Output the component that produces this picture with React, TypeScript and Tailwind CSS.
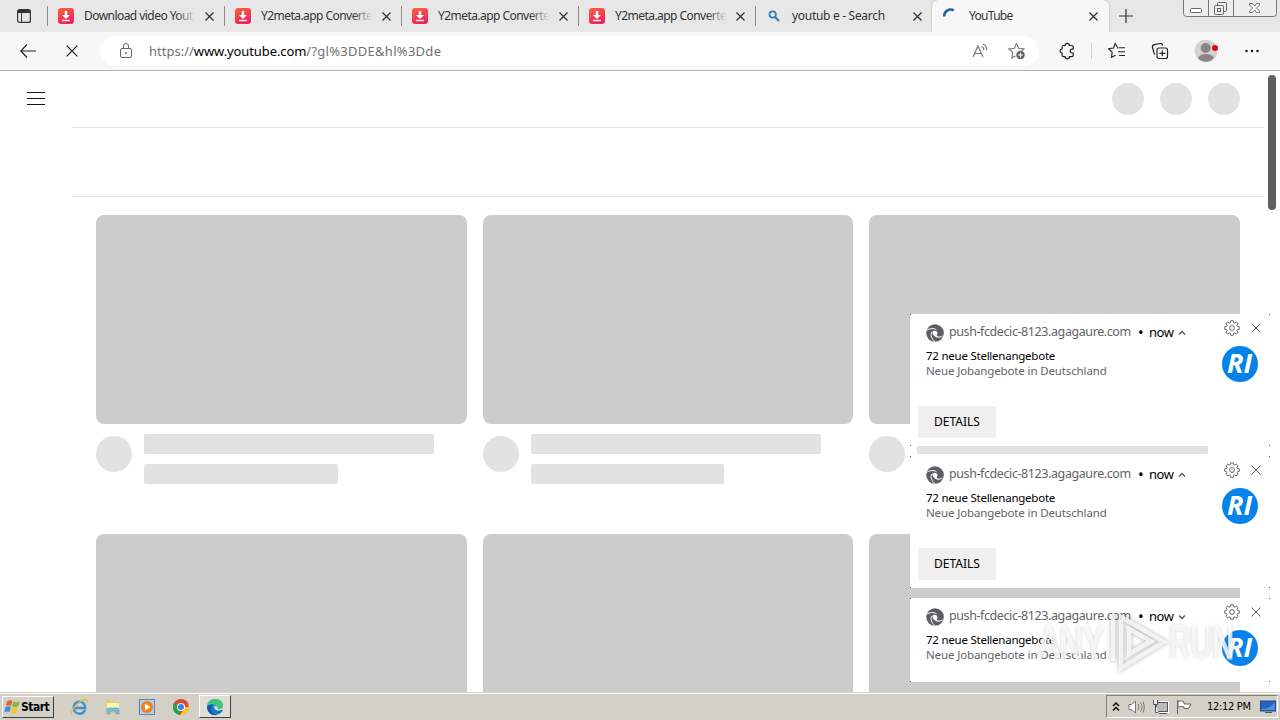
import type { ReactNode } from "react";

const tabs = [
  { icon: "download", title: "Download video Yout" },
  { icon: "download", title: "Y2meta.app Converte" },
  { icon: "download", title: "Y2meta.app Converte" },
  { icon: "download", title: "Y2meta.app Converte" },
  { icon: "search", title: "youtub e - Search" },
];

const notifications = [
  { id: 1, expanded: true },
  { id: 2, expanded: true },
  { id: 3, expanded: false },
];

function Cross({ size = 9, width = 1.4, color = "#333" }: { size?: number; width?: number; color?: string }) {
  return (
    <svg width={size} height={size} viewBox="0 0 10 10" fill="none" stroke={color} strokeWidth={width}>
      <path d="M.5.5l9 9M9.5.5l-9 9" />
    </svg>
  );
}

function DownloadIcon() {
  return (
    <svg width="16" height="16" viewBox="0 0 16 16" className="shrink-0">
      <defs>
        <linearGradient id="dl" x1="0" y1="0" x2="0.4" y2="1">
          <stop offset="0" stopColor="#f8663c" />
          <stop offset="1" stopColor="#f02361" />
        </linearGradient>
      </defs>
      <rect width="16" height="16" rx="3" fill="url(#dl)" />
      <path d="M6.8 3h2.4v4H12L8 11 4 7h2.8z" fill="#fff" />
      <path d="M4 12.5h8" stroke="#fff" strokeWidth="1.4" />
    </svg>
  );
}

function SearchIcon() {
  return (
    <svg width="16" height="16" viewBox="0 0 16 16" fill="none" stroke="#2f7bc8" className="shrink-0">
      <circle cx="6.7" cy="6.5" r="3.2" strokeWidth="1.7" />
      <path d="M9 9l4 4" strokeWidth="2" />
    </svg>
  );
}

function TabStrip() {
  return (
    <div className="flex h-8 bg-[#e7e7e7] text-[#333]">
      <div className="flex w-[47px] shrink-0 items-center pl-[17px]">
        <svg width="14" height="14" viewBox="0 0 14 14" fill="none" stroke="#333">
          <rect x=".6" y=".6" width="12.8" height="12.8" rx="2" strokeWidth="1.2" />
          <path d="M1 2.5h12" strokeWidth="3" />
          <path d="M4.5 3v10" />
        </svg>
      </div>
      {tabs.map((tab, i) => (
        <div key={i} className="flex h-8 w-[177px] shrink-0 items-center">
          <span className="h-5 w-px bg-[#8c8c8c]" />
          <span className="ml-[10px] flex">{tab.icon === "download" ? <DownloadIcon /> : <SearchIcon />}</span>
          <span
            className={`relative ml-[10px] w-[112px] text-[12px] leading-[18px] whitespace-nowrap ${
              tab.icon === "download" ? "tracking-[-0.55px]" : "tracking-[-0.3px]"
            }`}
          >
            {tab.title}
            {tab.icon === "download" && (
              <span className="absolute inset-y-0 right-0 w-5 bg-linear-to-r from-[#e7e7e7]/0 to-[#e7e7e7]" />
            )}
          </span>
          <span className="ml-[9px] flex">
            <Cross />
          </span>
        </div>
      ))}
      <div className="flex h-8 w-[177px] shrink-0 items-center rounded-t-md bg-[#f7f7f7] shadow-[0_0_2px_#999] [clip-path:inset(0_-3px_0_-3px)]">
        <svg width="16" height="16" viewBox="0 0 16 16" fill="none" className="ml-[10px]">
          <path d="M2.2 8.5A6.5 6.5 0 0 1 11.8 2.4" stroke="#1b62ae" strokeWidth="2.6" />
        </svg>
        <span className="ml-[11px] w-[111px] text-[12px] leading-[18px] tracking-[-0.7px]">YouTube</span>
        <span className="ml-[9px] flex">
          <Cross />
        </span>
      </div>
      <svg width="14" height="14" viewBox="0 0 14 14" fill="none" stroke="#333" strokeWidth="1.2" className="mt-[9px] ml-[10px]">
        <path d="M7 0v14M0 7h14" />
      </svg>
      <svg width="94" height="18" viewBox="0 0 94 18" fill="#eee" stroke="#666" className="ml-[50px]">
        <path d="M.5-1v14.5a3 3 0 0 0 3 3h87a3 3 0 0 0 3-3V-1z" stroke="#777" />
        <path d="M25.5 0v16M50.5 0v16" stroke="#777" />
        <rect x="7.5" y="8.5" width="11" height="4" rx="1" fill="#fff" />
        <rect x="34.5" y="2.5" width="9" height="9" rx="1" />
        <rect x="31.5" y="5.5" width="9" height="9" rx="1" />
        <rect x="34.5" y="8.5" width="3" height="3" />
        <path
          d="M66.5 3.5h3l2 2.5 2-2.5h3v1.500l-3 3 3 3.200v1.300h-3l-2-2.500-2 2.500h-3v-1.300l3-3.200-3-3z"
          fill="#fff"
          strokeWidth=".9"
        />
      </svg>
    </div>
  );
}

function Toolbar() {
  return (
    <div className="flex h-[39px] items-center border-b border-[#b4b4b4] bg-[#f7f7f7]">
      <svg width="16" height="14" viewBox="0 0 16 14" fill="none" stroke="#222" strokeWidth="1.2" className="ml-5">
        <path d="M7 .5L.8 7 7 13.500M1 7h15" />
      </svg>
      <span className="ml-[30px] flex">
        <Cross size={12} width={1} color="#222" />
      </span>
      <div className="ml-[22px] flex h-[30px] w-[939px] items-center rounded-full bg-white">
        <svg width="12" height="16" viewBox="0 0 12 16" fill="none" stroke="#666" className="ml-5">
          <rect x=".5" y="5.5" width="11" height="9" rx="1.5" />
          <path d="M3.500 5.500V3a2.500 2.500 0 0 1 5 0v2.500" />
          <circle cx="6" cy="10" r=".6" fill="#666" />
        </svg>
        <span className="ml-[17px] w-[320px] text-[13px] leading-[18px] whitespace-nowrap text-[#707070]">
          <span>https://</span>
          <span className="tracking-[-0.1px] text-black">www.youtube.com</span>
          <span className="tracking-[0.28px]">/?gl%3DDE&amp;hl%3Dde</span>
        </span>
        <svg width="17" height="16" viewBox="0 0 17 16" fill="none" stroke="#777" strokeWidth="1.2" className="ml-[503px]">
          <path d="M1 14L6 3l5 11M2.800 10.500h6.500M9.500 3.500c1.500.5 2.300 1.700 2.300 3.500M10.800 1c2.500.8 4 3 4 6" />
        </svg>
        <svg width="18" height="18" viewBox="0 0 18 18" fill="none" stroke="#777" className="ml-[19px]">
          <path d="M8.500 1.500l2.200 4.700 5.300.7-3.500 3.200M8.500 1.500L6.300 6.200.9 7l3.900 3.700-1 5.300 3.700-2" strokeWidth="1.1" />
          <circle cx="12.5" cy="13" r="4.3" fill="#666" stroke="none" />
          <path d="M12.500 10.700v4.600M10.200 13h4.600" stroke="#fff" />
        </svg>
      </div>
      <svg width="16" height="18" viewBox="0 0 16 18" fill="none" stroke="#222" strokeWidth="1.2" className="ml-5">
        <path d="M4.500 3.500h1.700a2.100 2.100 0 0 1 4.200 0h2.400a1.400 1.400 0 0 1 1.400 1.400v2.300h-1.100a1.900 1.900 0 0 0 0 3.800h1.100v2.300a1.400 1.400 0 0 1-1.400 1.400h-2.400a2.100 2.100 0 0 1-4.200 0H4.500a1.400 1.400 0 0 1-1.400-1.400V11a2 2 0 0 1 0-4V4.900a1.400 1.400 0 0 1 1.400-1.400z" />
      </svg>
      <span className="ml-[16px] h-4 w-px bg-[#d2d2d2]" />
      <svg width="18" height="18" viewBox="0 0 18 18" fill="none" stroke="#222" strokeWidth="1.1" className="ml-4">
        <path d="M10.500 6H9.800L7.300 1.500 5.500 6 .7 6.800l3.500 3.500-.8 5 4.200-2.100M11 5.800h6M10 9.700h7M11 13.500h6" />
      </svg>
      <svg width="18" height="18" viewBox="0 0 18 18" fill="none" stroke="#222" strokeWidth="1.2" className="ml-[25px]">
        <rect x="6" y="6" width="10.5" height="10.5" rx="2" />
        <path d="M11.300 8.300v6M8.300 11.300h6M3.500 12.500L1.500 5.500C1.200 4 1.800 3 3.300 2.700l6-1.200c1.400-.2 2 .3 2.400 2" />
      </svg>
      <svg width="24" height="24" viewBox="0 0 24 24" className="ml-[25px]">
        <circle cx="12" cy="12" r="11.3" fill="#d2d2d2" />
        <circle cx="11.7" cy="9" r="5" fill="#8b8585" />
        <path d="M4 19c1.500-3 4.500-4 8-4s6.500 1 8 4c-4.500 5-11.500 5-16 0z" fill="#8b8585" />
        <circle cx="21" cy="9" r="3" fill="#e30613" />
      </svg>
      <svg width="14" height="4" viewBox="0 0 14 4" fill="#222" className="ml-[27px]">
        <circle cx="1.5" cy="2" r="1.3" />
        <circle cx="7" cy="2" r="1.3" />
        <circle cx="12.5" cy="2" r="1.3" />
      </svg>
    </div>
  );
}

function VideoSkeleton() {
  return (
    <div className="h-[319px]">
      <div className="h-[209px] rounded-lg bg-[#ccc]" />
      <div className="flex pt-[10px]">
        <div className="mt-[2px] mr-3 h-9 w-9 shrink-0 rounded-full bg-[#e2e2e2]" />
        <div className="flex-1">
          <div className="h-5 w-[290.4px] rounded-[2px] bg-[#e2e2e2]" />
          <div className="mt-[10px] h-5 w-[193.6px] rounded-[2px] bg-[#e2e2e2]" />
        </div>
      </div>
    </div>
  );
}

function YouTubePage() {
  return (
    <main className="flex h-[621px] overflow-hidden bg-white">
      <div className="w-[72px] shrink-0 pt-[21px] pl-[27px]">
        <svg width="18" height="14" viewBox="0 0 18 14" stroke="#111">
          <path d="M0 .5h18M0 6.500h18M0 12.500h18" />
        </svg>
      </div>
      <div className="w-[1192px] shrink-0">
        <div className="flex h-[57px] justify-end gap-4 border-b border-[#e2e2e2] pt-3 pr-6">
          <div className="h-8 w-8 rounded-full bg-[#e2e2e2]" />
          <div className="h-8 w-8 rounded-full bg-[#e2e2e2]" />
          <div className="h-8 w-8 rounded-full bg-[#e2e2e2]" />
        </div>
        <div className="h-[69px] border-b border-[#e2e2e2]" />
        <div className="grid grid-cols-3 gap-x-4 px-6 pt-[18px]">
          {[1, 2, 3, 4, 5, 6].map((n) => (
            <VideoSkeleton key={n} />
          ))}
        </div>
      </div>
      <div className="pt-1 pl-1">
        <div className="h-[135px] w-2 rounded-full bg-[#5f5f5f]" />
      </div>
    </main>
  );
}

function GearIcon() {
  return (
    <svg width="16" height="16" viewBox="0 0 16 16" fill="none" stroke="#666" strokeWidth="1">
      <circle cx="8" cy="8" r="2.4" />
      <path d="M6.700.8h2.600l.4 1.900 1 .4 1.600-1.100 1.800 1.800L13 5.400l.4 1 1.900.4v2.400l-1.900.4-.4 1 1.100 1.600-1.800 1.800-1.600-1.100-1 .4-.4 1.900H6.700l-.4-1.900-1-.4L3.700 14l-1.800-1.800L3 10.600l-.4-1-1.900-.4V6.800l1.900-.4.4-1-1.100-1.600L3.700 2l1.600 1.100 1-.4z" />
    </svg>
  );
}

function EdgeGrayIcon() {
  return (
    <svg width="18" height="18" viewBox="0 0 18 18" className="mt-[2px] shrink-0">
      <circle cx="9" cy="9" r="8.8" fill="#5b5f63" />
      <path d="M0 6.800C3.500 4 8 4 10.500 5.800" fill="none" stroke="#fff" strokeWidth="1" />
      <path d="M5.800 8c-1.700 3-.2 7 3.200 9.700" fill="none" stroke="#fff" strokeWidth="1" />
      <path d="M6.500 7.500c2-1.800 5-.6 5 1.700 0 1.300-1.200 1.800-.6 2.800.9 1 4.100.8 6.300-.8-1.200 2.300-4.700 3-7 2-3-1.300-3.700-3.400-3.700-5.700z" fill="#fff" />
    </svg>
  );
}

function Notification({ expanded }: { expanded: boolean }) {
  return (
    <div className={`relative flex w-[360px] bg-white ${expanded ? "h-[132px]" : "h-[84px]"}`}>
      <span className="absolute top-0 left-0 h-px w-px bg-[#555]" />
      <span className="absolute top-0 right-0 h-px w-px bg-[#555]" />
      <span className="absolute bottom-0 left-0 h-px w-px bg-[#555]" />
      <span className="absolute right-0 bottom-0 h-px w-px bg-[#555]" />
      <div className="w-[312px] pt-[9px]">
        <div className="flex h-[18px] items-center pl-4 text-[13px] leading-[18px] whitespace-nowrap">
          <EdgeGrayIcon />
          <span className="ml-[5px] w-[182px] text-[12.5px] tracking-[-0.41px] text-[#5f6368]">push-fcdecic-8123.agagaure.com</span>
          <span className="ml-[7px] w-[5px] text-[15px] text-black">•</span>
          <span className="ml-[6px] w-[24px] tracking-[-0.5px] text-black">now</span>
          <svg width="8" height="6" viewBox="0 0 8 6" fill="none" stroke="#555" strokeWidth="1.4" className="mt-[2px] ml-[5px]">
            <path d={expanded ? "M1 4.500l3-3 3 3" : "M1 1.500l3 3 3-3"} />
          </svg>
        </div>
        <div className="mt-[7px] pl-4 text-[11.5px] leading-[15px] whitespace-nowrap">
          <p className="tracking-[-0.24px] text-black">72 neue Stellenangebote</p>
          <p className="tracking-[-0.13px] text-[#5f6368]">Neue Jobangebote in Deutschland</p>
        </div>
        {expanded && (
          <button className="mt-[28px] ml-2 flex h-8 w-[78px] items-center justify-center rounded-[2px] bg-[#efefef] text-[12px] text-black">
            DETAILS
          </button>
        )}
      </div>
      <div className="pt-[6px]">
        <div className="flex items-center gap-[11px] pl-[2px]">
          <GearIcon />
          <Cross size={10} width={1} color="#555" />
        </div>
        <div className="mt-[10px] flex h-9 w-9 items-center justify-center rounded-full bg-[#0683ea] pr-px pb-px font-['Open_Sans','Noto_Sans',sans-serif] text-[27px] font-bold text-white italic">
          RI
        </div>
      </div>
    </div>
  );
}

function Watermark() {
  return (
    <div className="absolute top-[610px] left-[1038px] flex h-[64px] w-[196px] items-center justify-between font-['Liberation_Sans',sans-serif] text-[46px] leading-none text-white/70 [-webkit-text-stroke:3px_#fffa] [text-shadow:0_0_4px_#0006]">
      <span className="w-[68px]">
        <span className="inline-block origin-left scale-x-[0.7]">ANY</span>
      </span>
      <svg width="58" height="64" viewBox="0 0 58 64" fill="none" className="shrink-0 drop-shadow-[0_0_2px_#0006]">
        <path d="M4 4v47M12 7v51l43-26zM20 19v25l22-13z" stroke="#fff" strokeOpacity=".75" strokeWidth="4.5" />
      </svg>
      <span className="w-[65px]">
        <span className="inline-block origin-left scale-x-[0.65]">RUN</span>
      </span>
    </div>
  );
}

function LaunchIcon({ children }: { children: ReactNode }) {
  return (
    <svg width="18" height="18" viewBox="0 0 18 18" className="shrink-0">
      {children}
    </svg>
  );
}

function Taskbar() {
  return (
    <footer className="flex h-7 items-center border-t border-[#d4d0c8] bg-[#d4d0c8] font-['DejaVu_Sans_Condensed','DejaVu_Sans',sans-serif] shadow-[inset_0_1px_#fff]">
      <div className="ml-[2px] flex h-[22px] w-[52px] items-center border border-t-white border-r-[#404040] border-b-[#404040] border-l-white pl-px text-[12px] font-bold tracking-[-0.5px] text-black">
        <svg width="17" height="17" viewBox="0 0 16 16" className="shrink-0">
          <path d="M3 3c2-1.200 3.500-1 5-.2L6.700 7.500c-1.500-.8-3-.8-5 0z" fill="#e8612c" />
          <path d="M9 3.300c2 1 4 .9 6-.3l-1.500 4.700c-2 1-3.700 1.200-5.700.2z" fill="#80ba42" />
          <path d="M1.500 8.500c2-1 3.500-.8 5 0l-1.300 4.700c-1.500-.8-3.200-.8-5 .2z" fill="#3f8edb" />
          <path d="M7.500 9c2 .9 3.700.8 5.700-.2L12 13.300c-2 1.200-4 1.300-5.800.4z" fill="#f5c42c" />
        </svg>
        Start
      </div>
      <div className="ml-4 flex items-center gap-4">
        <LaunchIcon>
          <path d="M15 12c-1 2.500-3 3.700-5.500 3.700-3.500 0-5.700-2.600-5.700-6s2.300-6 5.700-6c3.700 0 5.700 2.700 5.700 6.200H5" fill="none" stroke="#3a94d5" strokeWidth="2.5" />
          <path d="M2 17C-1 13.500 10 1.500 16 1.500c2 0 1.500 2 .6 3" fill="none" stroke="#e3bd45" strokeWidth="1.3" />
        </LaunchIcon>
        <LaunchIcon>
          <path d="M2 4l1-2h4l1 2h7v11H2z" fill="#e9c761" />
          <path d="M3 5h12v5H3z" fill="#fff2b6" />
          <path d="M3 16v-4q0-2 2-2h8q2 0 2 2v4h-3v-3H6v3z" fill="#75bde4" stroke="#4c8cba" strokeWidth=".5" />
        </LaunchIcon>
        <LaunchIcon>
          <rect x="1.5" y="1.5" width="15" height="15" fill="#acd0ee" stroke="#5388ba" />
          <circle cx="9" cy="9" r="6" fill="#f28119" />
          <path d="M7 5.500v7l5.500-3.500z" fill="#fff" />
        </LaunchIcon>
        <LaunchIcon>
          <circle cx="9" cy="9" r="8" fill="#df4437" />
          <path d="M9 9L2 5.100A8 8 0 0 0 8 17z" fill="#27a151" />
          <path d="M9 9h7.500V5.800A8 8 0 0 1 8 17l4-6z" fill="#f9c72d" />
          <circle cx="9" cy="9" r="4" fill="#fff" />
          <circle cx="9" cy="9" r="3" fill="#397ee7" />
        </LaunchIcon>
      </div>
      <div className="ml-[9px] flex h-[23px] w-8 items-center justify-center border border-t-white border-r-[#404040] border-b-[#404040] border-l-white bg-[#e0ddd7]">
        <LaunchIcon>
          <circle cx="9" cy="9" r="8" fill="#1787d5" />
          <path d="M1 8C2 2 7 1 10 1c5 0 7.500 4 7 8-.4 2.500-3 3-5.500 2.500C12 7 6 4.500 1 8z" fill="#3cc678" />
          <path d="M7 7c-4 4-1 9 5 9.500C6 19 1 14 1 9c1-2 4-3 6-2z" fill="#1458a8" />
          <path d="M8 7c-2 3 0 6 4 6 2 0 3-.5 4-1 .5-.3 1 0 .5 1-1.500 2.500-4 3-6 2.500C6 14 5 9 8 7z" fill="#1673c0" />
          <path d="M8.500 8c-1 2 .5 4.300 3.500 4.500 2 .1 4-.5 5-1.500l1 2V9h-1c-1 2-3.500 2.500-5.500 2 .8-1.500-.5-3.500-3-3z" fill="#e0ddd7" />
        </LaunchIcon>
      </div>
      <div className="mr-[2px] ml-auto flex h-[23px] w-[172px] items-center border border-t-[#808080] border-r-white border-b-white border-l-[#808080] pl-[5px]">
        <svg width="8" height="10" viewBox="0 0 8 10" fill="none" stroke="#000" strokeWidth="1.4">
          <path d="M1 4l3-3 3 3M1 8.500l3-3 3 3" />
        </svg>
        <svg width="17" height="16" viewBox="0 0 17 16" fill="#fff" stroke="#777" className="ml-2">
          <path d="M1 5.500h2.500L7.500 2v12l-4-3.500H1z" />
          <path d="M10 5c1 2 1 4 0 6M12.500 3.500c2 3 2 6 0 9M15 2.500c1.700 3.500 1.700 7.500 0 11" fill="none" />
        </svg>
        <svg width="17" height="16" viewBox="0 0 17 16" fill="#eee" stroke="#555" className="ml-[7px]">
          <rect x="4.5" y="3.5" width="11" height="9" fill="#bbb" stroke="#fff" strokeWidth="3" />
          <rect x="4.5" y="3.5" width="11" height="9" fill="#bbb" />
          <path d="M7 14.500h8M1.500 1v4.500h4V1M3.500 5.500v8h3" />
        </svg>
        <svg width="17" height="16" viewBox="0 0 17 16" fill="#fff" stroke="#666" className="ml-[7px]">
          <path d="M1.500 1v14M2 2.500c3-1 4.500-.5 6 .5v2h7l-2.500 4.500H8V8c-2-.8-4-.5-6 0z" />
        </svg>
        <span className="mt-px ml-[14px] w-[47px] text-[11px] tracking-[-0.3px] whitespace-nowrap text-black">12:12 PM</span>
        <svg width="16" height="16" viewBox="0 0 16 16" className="ml-[6px]">
          <rect x=".5" y="2" width="15" height="10" fill="#2664bb" stroke="#1c4c8f" />
          <path d="M1 10c7 0 11-3 14-7v8H1z" fill="#4b91dc" />
          <path d="M5 13.500h7" stroke="#555" />
        </svg>
      </div>
    </footer>
  );
}

export default function App() {
  return (
    <div className="relative h-[720px] w-[1280px] overflow-hidden bg-white font-['Noto_Sans','Open_Sans',sans-serif]">
      <TabStrip />
      <Toolbar />
      <YouTubePage />
      <Taskbar />
      <div className="absolute top-[314px] left-[910px] flex flex-col gap-[10px]">
        {notifications.map((n) => (
          <Notification key={n.id} expanded={n.expanded} />
        ))}
      </div>
      <Watermark />
    </div>
  );
}
